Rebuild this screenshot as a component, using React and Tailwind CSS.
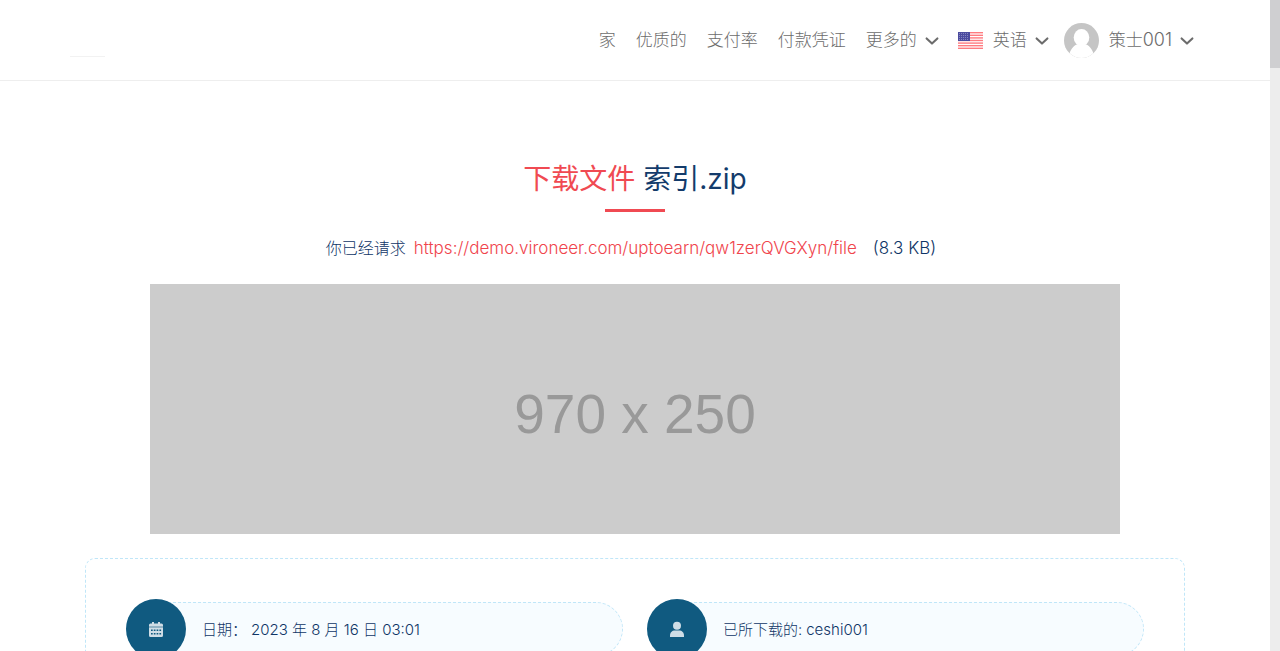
const navLinks = ["家", "优质的", "支付率", "付款凭证"];

const ChevronIcon = () => (
  <svg viewBox="0 0 14 14" className="w-3.5 h-3.5 mt-0.5" fill="none" aria-hidden="true">
    <path
      d="M1.6 4.4 7 9.6l5.4-5.2"
      stroke="currentColor"
      strokeWidth="2.1"
      strokeLinecap="round"
      strokeLinejoin="round"
    />
  </svg>
);

const FlagIcon = () => (
  <svg viewBox="0 0 25 17" className="w-[25px] h-[17px]" aria-hidden="true">
    <rect width="25" height="17" fill="#ff7b80" />
    {[2, 4.6, 7.2, 9.8, 12.4, 15].map((y) => (
      <rect key={y} y={y - 0.6} width="25" height="1.2" fill="#fff" />
    ))}
    <rect width="12" height="9" fill="#4b4b9f" />
    {[1, 3, 5, 7].map((y) => (
      <path key={y} d={`M1 ${y + 0.5}h10`} stroke="#8585bf" strokeWidth="1" strokeDasharray="1 1" />
    ))}
  </svg>
);

const Avatar = () => (
  <svg viewBox="0 0 35 35" className="w-[35px] h-[35px] rounded-full" aria-hidden="true">
    <path d="M0 0h35v35H0z" fill="#c5c5c5" />
    <ellipse cx="17.5" cy="14.5" rx="7.8" ry="8.5" fill="#fff" />
    <path d="M5.5 30.5C7 26 10 22 14 21h7c4 1 7 5 8.5 9.5L36 36H-1z" fill="#fff" />
  </svg>
);

const CalendarIcon = () => (
  <svg viewBox="0 0 14 16" className="w-3.5 h-4" fill="currentColor" aria-hidden="true">
    <path d="M3 1h2v1.5h4V1h2v1.5h1.5Q14 2.5 14 4v1.5H0V4q0-1.5 1.5-1.5H3z" />
    <path d="M0 5.5h14v1H0z" opacity="0.7" />
    <path
      fillRule="evenodd"
      d="M0 6.5h14v8q0 1.500-1.500 1.500h-11Q0 16 0 14.500zM2 8.500v1.500h1.700V8.500zM4.800 8.500v1.500h1.700V8.500zM7.600 8.500v1.500h1.700V8.500zM10.400 8.500v1.500h1.700V8.500zM2 12v1.500h1.700V12zM4.800 12v1.500h1.700V12zM7.600 12v1.500h1.700V12zM10.400 12v1.500h1.700V12z"
    />
  </svg>
);

const UserIcon = () => (
  <svg viewBox="0 0 14 16" className="w-3.5 h-4" fill="currentColor" aria-hidden="true">
    <circle cx="7" cy="4.7" r="4" />
    <path d="M0 16v-1.500c0-3 2-5 5-5h4c3 0 5 2 5 5V16z" />
  </svg>
);

const fileDetails = [
  { icon: CalendarIcon, label: "日期：", value: "2023 年 8 月 16 日 03:01" },
  { icon: UserIcon, label: "已所下载的:", value: "ceshi001" },
];

const Header = () => (
  <header className="h-[81px] border-b border-[#eeeeee]">
    <div className="max-w-[1130px] h-20 mx-auto flex items-center justify-between">
      <a href="#home" aria-label="Home" className="w-[35px] h-[33px] border-b border-[#f2f2f2]" />
      <nav className="flex items-center text-[17px] leading-6 text-[#6c6c6c] pr-1.5">
        <div className="flex gap-5 mr-5">
          {navLinks.map((link) => (
            <a key={link} href="#nav">{link}</a>
          ))}
        </div>
        <button type="button" className="flex items-center gap-2 mr-[19px]">
          更多的
          <ChevronIcon />
        </button>
        <button type="button" className="flex items-center gap-2 mr-[15px]">
          <span className="flex items-center gap-2.5">
            <FlagIcon />
            英语
          </span>
          <ChevronIcon />
        </button>
        <button type="button" className="flex items-center gap-2">
          <span className="flex items-center gap-2.5">
            <Avatar />
            <span>策士<span className="text-lg leading-6">001</span></span>
          </span>
          <ChevronIcon />
        </button>
      </nav>
    </div>
  </header>
);

const DetailItem = ({ icon: Icon, label, value }) => (
  <div className="flex items-center">
    <div className="w-[60px] h-[60px] rounded-full bg-[#105a80] text-[#cfdde6] flex items-center justify-center z-10">
      <Icon />
    </div>
    <div className="flex-1 h-[54px] -ml-[60px] pl-[75px] pt-0.5 flex items-center gap-1 rounded-full border border-dashed border-[#c0e6f8] bg-[#f7fcff] text-[15px]">
      <span>{label}</span>
      <span>{value}</span>
    </div>
  </div>
);

const App = () => {
  return (
    <div className="h-screen flex overflow-hidden bg-white font-light font-['Inter','Noto_Sans_CJK_SC',sans-serif] text-[#0f3566]">
      <div className="flex-1 min-w-0">
        <Header />
        <main className="max-w-[1100px] mx-auto pt-[78px]">
          <div className="flex flex-col items-center">
            <h1 className="text-[28px] leading-10 font-normal text-[#133b6b]">
              <span className="text-[#f04a52]">下载文件</span> 索引.zip
            </h1>
            <div className="w-[60px] h-[3px] mt-2.5 bg-[#f04a52]" />
            <p className="mt-6 pr-2 text-base leading-6 flex gap-2">
              <span>你已经请求</span>
              <a href="#file" className="text-[17px] text-[#f0444c]">
                https://demo.vironeer.com/uptoearn/qw1zerQVGXyn/file
              </a>
              <span className="pl-2 text-[17px]">(8.3 KB)</span>
            </p>
          </div>
          <div className="max-w-[970px] h-[250px] mx-auto mt-6 pt-2.5 bg-[#cccccc] text-[#999999] flex items-center justify-center font-normal text-[55px] font-['Liberation_Sans',Arial,sans-serif]">
            970 x 250
          </div>
          <section className="mt-6 p-10 grid grid-cols-2 gap-6 rounded-[10px] border border-dashed border-[#c0e6f8]">
            {fileDetails.map((item) => (
              <DetailItem key={item.label} {...item} />
            ))}
          </section>
        </main>
      </div>
      <div className="w-2.5 bg-[#ededed]">
        <div className="h-[68px] bg-[#cfcfd1]" />
      </div>
    </div>
  );
};

export default App;
